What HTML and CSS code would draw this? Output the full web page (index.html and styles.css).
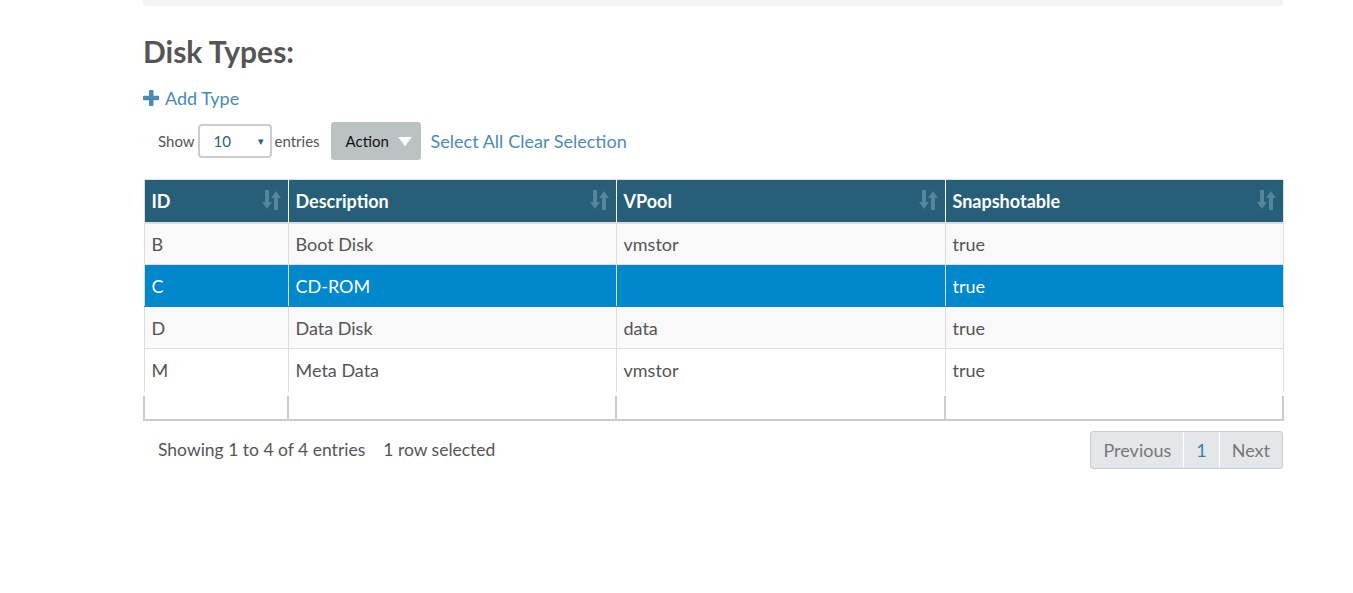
FILE: index.html
```html
<!DOCTYPE html>
<html>
<head>
<meta charset="utf-8">
<link rel="stylesheet" href="styles.css">
</head>
<body>
<div class="container">
  <div class="topbar"></div>
  <h2 class="title">Disk Types:</h2>
  <a class="add" href="#"><svg class="plus" width="16" height="16" viewBox="0 0 16 16"><rect x="6" y="0" width="4.5" height="16" rx="0.8" fill="#4a8ab5"/><rect x="0" y="5.8" width="16" height="4.5" rx="0.8" fill="#4a8ab5"/></svg>Add Type</a>
  <div class="toolbar">
    <label class="show">Show
      <span class="select"><span class="val">10</span><span class="caret">▾</span></span>
      entries</label>
    <button class="action">Action <svg width="14" height="9" viewBox="0 0 14 9"><path d="M0 0 L14 0 L7 9 Z" fill="#fff"/></svg></button>
    <a class="sel" href="#">Select All</a> <a class="sel" href="#">Clear Selection</a>
  </div>
  <table class="grid">
    <thead>
      <tr>
        <th class="c1">ID<span class="sort"></span></th>
        <th class="c2">Description<span class="sort"></span></th>
        <th class="c3">VPool<span class="sort"></span></th>
        <th class="c4">Snapshotable<span class="sort"></span></th>
      </tr>
    </thead>
    <tbody>
      <tr class="odd"><td>B</td><td>Boot Disk</td><td>vmstor</td><td>true</td></tr>
      <tr class="selected"><td>C</td><td>CD-ROM</td><td></td><td>true</td></tr>
      <tr class="odd"><td>D</td><td>Data Disk</td><td>data</td><td>true</td></tr>
      <tr class="even last"><td>M</td><td>Meta Data</td><td>vmstor</td><td>true</td></tr>
    </tbody>
    <tfoot>
      <tr><td></td><td></td><td></td><td></td></tr>
    </tfoot>
  </table>
  <div class="footer">
    <div class="info">Showing 1 to 4 of 4 entries<span class="selinfo">1 row selected</span></div>
    <div class="pager">
      <span class="pbtn">Previous</span><span class="pbtn num">1</span><span class="pbtn">Next</span>
    </div>
  </div>
</div>
</body>
</html>
```
FILE: styles.css
```css
* { box-sizing: border-box; }
html, body { margin: 0; padding: 0; background: #fff; }
body { font-family: Lato, "Open Sans", sans-serif; color: #555; }
.container { width: 1140px; margin-left: 143px; }
.topbar { height: 6px; background: #f3f3f3; border-radius: 0 0 4px 4px; }
.title { margin: 27px 0 0 0; font-size: 30px; font-weight: 700; color: #555; line-height: 36px; height: 36px; }
.add { display: inline-flex; align-items: center; gap: 6px; margin-top: 18px; font-size: 18px; color: #4a8ab5; text-decoration: none; line-height: 22px; }
.plus { display: block; }
.toolbar { display: flex; align-items: center; margin-top: 13px; height: 38px; padding-left: 15px; }
.show { display: flex; align-items: center; font-size: 15px; color: #555; gap: 3px; }
.select { display: inline-flex; align-items: center; justify-content: space-between; width: 74px; height: 34px; border: 2px solid #ccc; border-radius: 4px; padding: 0 6px 0 14px; color: #2a5f7a; font-size: 15px; }
.caret { font-size: 11px; color: #2a5f7a; }
.action { margin-left: 11px; display: inline-flex; align-items: center; gap: 9px; height: 38px; width: 90px; padding: 0 0 0 15px; border: none; border-radius: 3px; background: #bcc1c4; font-family: Lato, sans-serif; font-size: 15px; color: #111; }
.sel { color: #4a8ab5; text-decoration: none; font-size: 18px; margin-left: 10px; }
.sel + .sel { margin-left: 5px; }
.grid { margin-top: 19px; width: 1139px; border-collapse: collapse; table-layout: fixed; font-size: 18px; }
.c1 { width: 144px; } .c2 { width: 328px; } .c3 { width: 329px; } .c4 { width: 338px; }
.grid th { position: relative; background: #265f77; color: #fff; text-align: left; font-weight: 700; font-size: 18px; height: 43px; padding: 0 8px 0 7px; border-left: 1px solid #fff; border-right: 1px solid #fff; border-bottom: 2px solid #ddd; border-top: 1px solid #e0e0e0; }
.grid th:first-child { border-left: 1px solid #ddd; }
.grid th:last-child { border-right: 1px solid #ddd; }
.sort { position: absolute; right: 8px; top: 10px; width: 18px; height: 20px; }
.sort::before, .sort::after { content: ""; position: absolute; width: 0; height: 0; }
.sort { background:
  linear-gradient(#55879c, #55879c) 3px 0 / 4px 13px no-repeat,
  linear-gradient(#55879c, #55879c) 12px 7px / 4px 13px no-repeat; }
.sort::before { left: 0; top: 12px; border-left: 5px solid transparent; border-right: 5px solid transparent; border-top: 7px solid #55879c; }
.sort::after { left: 9px; top: 1px; border-left: 5px solid transparent; border-right: 5px solid transparent; border-bottom: 7px solid #55879c; }
.grid td { height: 42px; padding: 0 8px 0 7px; border: 1px solid #ddd; border-top: none; color: #555; }
.grid tbody td { border-bottom: 1px solid #ddd; }
.grid tr.odd td { background: #f9f9f9; }
.grid tr.even td { background: #fff; }
.grid tr.selected td { background: #0088cc; color: #fff; border-bottom-color: #0088cc; }
.grid tbody tr.last td { height: 45px; border-bottom: 4px solid #fff; }
.grid tfoot td { height: 26px; border: 2px solid #ccc; border-top: 1px solid #ccc; background: #fff; }
.footer { display: flex; justify-content: space-between; align-items: center; margin-top: 10px; }
.info { font-size: 17.5px; color: #555; padding-left: 15px; }
.selinfo { margin-left: 18px; }
.pager { display: flex; border: 1px solid #ccc; border-radius: 3px; overflow: hidden; background: #e4e7ea; }
.pbtn { font-size: 18px; color: #777; height: 36px; display: flex; align-items: center; padding: 0 12px; }
.pbtn + .pbtn { border-left: 1px solid #fff; }
.num { color: #3c7eab; padding: 0 12px; }
```
